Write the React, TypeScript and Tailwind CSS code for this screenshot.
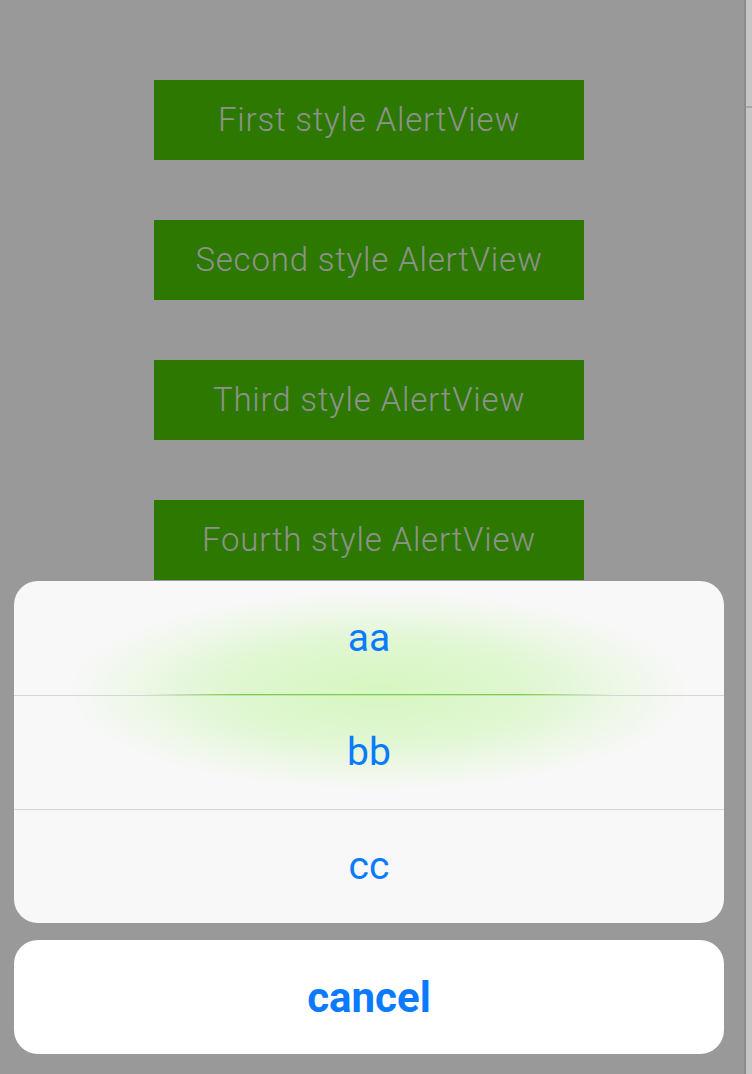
const buttons = [
  "First style AlertView",
  "Second style AlertView",
  "Third style AlertView",
  "Fourth style AlertView",
];

const options = ["aa", "bb", "cc"];

export default function App() {
  return (
    <main
      className="relative flex h-[1074px] w-[752px] overflow-hidden bg-[#999999]"
      style={{ fontFamily: "Roboto, 'Liberation Sans', sans-serif" }}
    >
      {/* Buttons behind the dimmed overlay */}
      <section className="flex flex-1 flex-col items-center gap-[60px] pr-[6px] pt-[80px]">
        {buttons.map((label) => (
          <button
            key={label}
            className="flex h-[80px] w-[430px] items-center justify-center bg-[#2d7800] text-[33px] font-light tracking-[0.8px] text-[#8e928c]"
          >
            {label}
          </button>
        ))}
      </section>

      {/* Scroll edge on the right */}
      <div className="flex w-[8px] flex-col border-l-2 border-[#8c8c8c] bg-[#c6c6c6]">
        <div className="h-[106px]" />
        <div className="h-[2px] bg-[#a8a8a8]" />
      </div>

      {/* Action sheet */}
      <div className="absolute bottom-[20px] left-[14px] flex w-[710px] flex-col gap-[17px]">
        <div className="relative overflow-hidden rounded-[24px] bg-[#f8f8f8]">
          <div className="pointer-events-none absolute left-[50px] top-[10px] h-[200px] w-[630px] rounded-full bg-[radial-gradient(ellipse_at_center,#d6f7c0_0%,#e0f7d2_35%,rgba(248,248,248,0)_70%)]" />
          {options.map((opt, i) => (
            <div
              key={opt}
              className={
                "relative flex h-[114px] items-center justify-center text-[39px] text-[#0a7aff] " +
                (i > 0 ? "border-t border-[#d6d6da]" : "")
              }
            >
              {opt}
            </div>
          ))}
          <div className="pointer-events-none absolute left-[130px] top-[113px] h-px w-[470px] bg-[linear-gradient(90deg,rgba(102,221,34,0),#66dd22_20%,#66dd22_80%,rgba(102,221,34,0))]" />
        </div>
        <button className="flex h-[114px] items-center justify-center rounded-[24px] bg-white text-[42px] font-bold text-[#0a7aff]">
          cancel
        </button>
      </div>
    </main>
  );
}
